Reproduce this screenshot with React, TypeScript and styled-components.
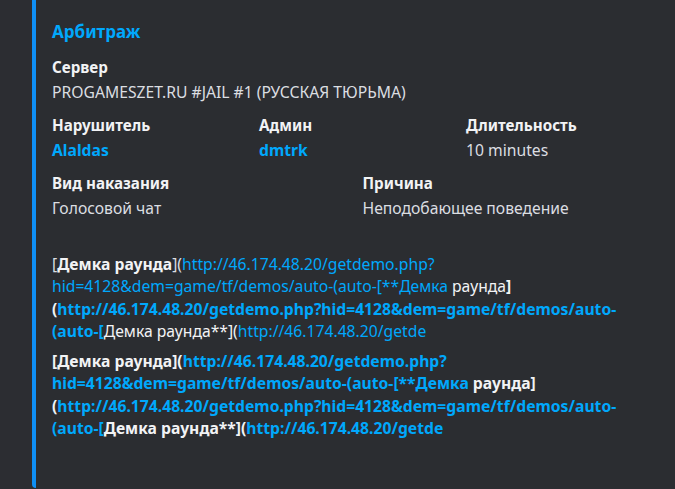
import React from "react";
import styled, { createGlobalStyle } from "styled-components";

const Global = createGlobalStyle`
  html, body { margin: 0; padding: 0; background: #2c2d32; }
  body { font-family: "Noto Sans", "Open Sans", sans-serif; }
`;

const Page = styled.div`
  width: 675px;
  height: 489px;
  overflow: hidden;
  padding-left: 32px;
  box-sizing: border-box;
`;

const Embed = styled.div`
  width: 649px;
  box-sizing: border-box;
  background: #2b2d31;
  border-left: 4px solid #0f8ff5;
  border-radius: 0 0 4px 4px;
  padding: 21px 16px 49px 16px;
  display: flex;
  flex-direction: column;
`;

const Title = styled.div`
  color: #00a8fc;
  font-weight: 700;
  font-size: 17px;
  line-height: 22px;
`;

const Fields = styled.div<{ $cols: number; $top: number }>`
  display: grid;
  grid-template-columns: ${(p) => `repeat(${p.$cols}, 1fr)`};
  column-gap: 8px;
  margin-top: ${(p) => p.$top}px;
`;

const Field = styled.div`
  display: flex;
  flex-direction: column;
  min-width: 0;
`;

const Name = styled.div`
  color: #f2f3f5;
  font-weight: 700;
  font-size: 15.2px;
  line-height: 22px;
  margin-bottom: 3px;
  min-height: 22px;
`;

const Value = styled.div`
  color: #dbdee1;
  font-size: 15.7px;
  line-height: 22px;
`;

const Desc = styled.div<{ $bold?: boolean }>`
  color: #dbdee1;
  font-size: 15.7px;
  line-height: 22.3px;
  font-weight: ${(p) => (p.$bold ? 700 : 400)};
  & + & { margin-top: 8px; }
`;

const Link = styled.span<{ $bold?: boolean }>`
  color: #00a8fc;
  font-weight: ${(p) => (p.$bold ? 700 : "inherit")};
`;

const B = styled.span`
  color: #f2f3f5;
  font-weight: 700;
`;

const W = styled.span`
  color: #f2f3f5;
`;

const Blue = styled.span`
  color: #00a8fc;
`;

export default function App() {
  return (
    <>
      <Global />
      <Page>
        <Embed>
          <Title>Арбитраж</Title>
          <Fields $cols={1} $top={13}>
            <Field>
              <Name>Сервер</Name>
              <Value>PROGAMESZET.RU #JAIL #1 (РУССКАЯ ТЮРЬМА)</Value>
            </Field>
          </Fields>
          <Fields $cols={3} $top={11}>
            <Field>
              <Name>Нарушитель</Name>
              <Value>
                <Link $bold>Alaldas</Link>
              </Value>
            </Field>
            <Field>
              <Name>Админ</Name>
              <Value>
                <Link $bold>dmtrk</Link>
              </Value>
            </Field>
            <Field>
              <Name>Длительность</Name>
              <Value>10 minutes</Value>
            </Field>
          </Fields>
          <Fields $cols={2} $top={11}>
            <Field>
              <Name>Вид наказания</Name>
              <Value>Голосовой чат</Value>
            </Field>
            <Field>
              <Name>Причина</Name>
              <Value>Неподобающее поведение</Value>
            </Field>
          </Fields>
          <Fields $cols={1} $top={9}>
            <Field>
              <Name />
              <Value as="div">
                <Desc>
                  [<B>Демка раунда</B>](
                  <Link>
                    http://46.174.48.20/getdemo.php?
                    <br />
                    hid=4128&amp;dem=game/tf/demos/auto-(auto-[**Демка
                  </Link>
                  <W> раунда</W>
                  <B>]</B>
                  <br />
                  <B>(</B>
                  <Link $bold>
                    http://46.174.48.20/getdemo.php?hid=4128&amp;dem=game/tf/demos/auto-
                    <br />
                    (auto-[
                  </Link>
                  <W>Демка раунда**](</W>
                  <Link>http://46.174.48.20/getde</Link>
                </Desc>
                <Desc $bold>
                  <W>[Демка раунда](</W>
                  <Blue>
                    http://46.174.48.20/getdemo.php?
                    <br />
                    hid=4128&amp;dem=game/tf/demos/auto-(auto-[**Демка
                  </Blue>
                  <W> раунда]</W>
                  <br />
                  <W>(</W>
                  <Blue>
                    http://46.174.48.20/getdemo.php?hid=4128&amp;dem=game/tf/demos/auto-
                    <br />
                    (auto-[
                  </Blue>
                  <W>Демка раунда**](</W>
                  <Blue>http://46.174.48.20/getde</Blue>
                </Desc>
              </Value>
            </Field>
          </Fields>
        </Embed>
      </Page>
    </>
  );
}
